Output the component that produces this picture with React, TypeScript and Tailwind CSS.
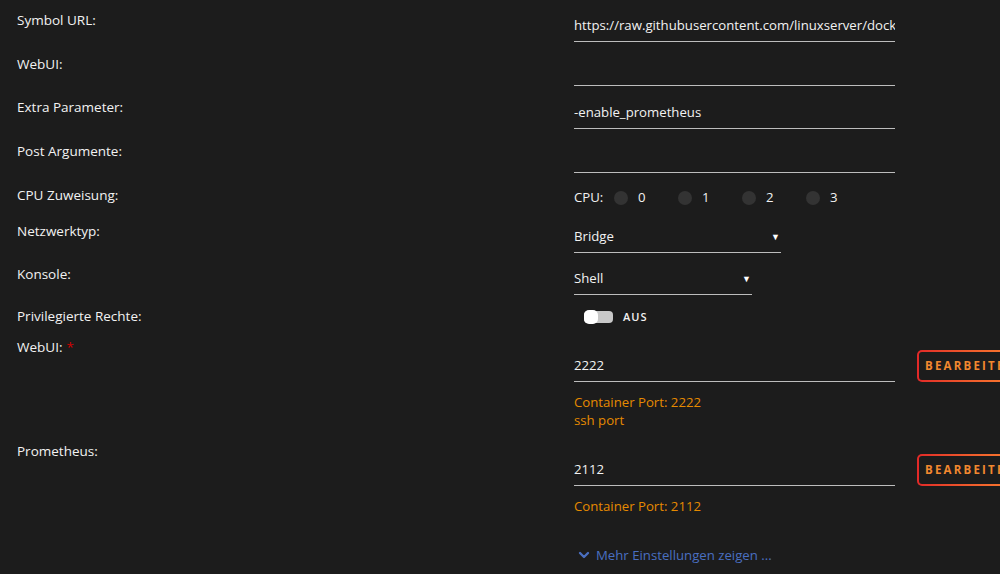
import { ChevronDown } from "lucide-react"
import type { ReactNode } from "react"

const font = { fontFamily: "'Open Sans', 'Noto Sans', sans-serif" }

function Label({ children, required }: { children: ReactNode; required?: boolean }) {
  return (
    <div className="w-[574px] shrink-0 pl-[17px] pt-[10px] text-[13.5px] leading-[20px] text-[#f2f2f2]">
      {children}
      {required && <span className="ml-1 text-[#d20000]">*</span>}
    </div>
  )
}

function TextInput({ value = "" }: { value?: string }) {
  return (
    <div className="w-[321px] h-[32px] flex items-center border-b border-[#bdbdbd] text-[13.2px] text-[#f2f2f2] overflow-hidden whitespace-nowrap">
      {value}
    </div>
  )
}

function Select({ value, width }: { value: string; width: string }) {
  return (
    <div
      className={`${width} h-[31px] flex items-center justify-between border-b border-[#bdbdbd] text-[13.2px] text-[#f2f2f2]`}
    >
      <span>{value}</span>
      <span className="mr-[1px] text-[9px] text-white">▼</span>
    </div>
  )
}

function EditButton() {
  return (
    <div className="ml-[22px] shrink-0 rounded-[5px] bg-gradient-to-r from-[#e22828] to-[#ff8d30] p-[2px]">
      <div className="h-[28px] w-[120px] rounded-[3px] bg-[#1c1c1c] pl-[6px] flex items-center text-[11.5px] font-bold tracking-[2.2px] text-[#f2882f] whitespace-nowrap">
        BEARBEITEN
      </div>
    </div>
  )
}

function Radio({ n }: { n: number }) {
  return (
    <div className="flex items-center w-[64px]">
      <span className="h-[14px] w-[14px] rounded-full bg-[#333333]" />
      <span className="ml-[10px]">{n}</span>
    </div>
  )
}

export default function App() {
  return (
    <div className="min-h-[574px] w-[1000px] overflow-hidden bg-[#1c1c1c]" style={font}>
      <div className="flex h-[44px]">
        <Label>Symbol URL:</Label>
        <div className="pt-[10px]">
          <TextInput value="https://raw.githubusercontent.com/linuxserver/docker-templates/master/linuxserver.io/img/openssh-server-logo.png" />
        </div>
      </div>
      <div className="flex h-[43px]">
        <Label>WebUI:</Label>
        <div className="pt-[10px]">
          <TextInput />
        </div>
      </div>
      <div className="flex h-[44px]">
        <Label>Extra Parameter:</Label>
        <div className="pt-[10px]">
          <TextInput value="-enable_prometheus" />
        </div>
      </div>
      <div className="flex h-[44px]">
        <Label>Post Argumente:</Label>
        <div className="pt-[10px]">
          <TextInput />
        </div>
      </div>
      <div className="flex h-[36px]">
        <Label>CPU Zuweisung:</Label>
        <div className="pt-[10px] flex items-center h-[36px] text-[13.2px] text-[#f2f2f2] self-start">
          <span className="w-[40px]">CPU:</span>
          <Radio n={0} />
          <Radio n={1} />
          <Radio n={2} />
          <Radio n={3} />
        </div>
      </div>
      <div className="flex h-[43px]">
        <Label>Netzwerktyp:</Label>
        <div className="pt-[11px]">
          <Select value="Bridge" width="w-[207px]" />
        </div>
      </div>
      <div className="flex h-[42px]">
        <Label>Konsole:</Label>
        <div className="pt-[10px]">
          <Select value="Shell" width="w-[178px]" />
        </div>
      </div>
      <div className="flex h-[31px]">
        <Label>Privilegierte Rechte:</Label>
        <div className="pt-[13px] pl-[10px] flex items-center gap-[10px] self-start">
          <div className="relative h-[12px] w-[29px] rounded-[4px] bg-[#c8c8c8]">
            <div className="absolute left-0 top-[-1px] h-[14px] w-[14px] rounded-[5px] bg-white" />
          </div>
          <span className="text-[11px] font-semibold tracking-[1px] text-[#f2f2f2]">AUS</span>
        </div>
      </div>
      <div className="flex h-[104px]">
        <Label required>WebUI:</Label>
        <div className="pt-[23px]">
          <div className="flex items-center">
            <TextInput value="2222" />
            <EditButton />
          </div>
          <div className="mt-[11px] text-[13.2px] leading-[18px] text-[#e68a00]">
            <div>Container Port: 2222</div>
            <div>ssh port</div>
          </div>
        </div>
      </div>
      <div className="flex h-[115px]">
        <Label>Prometheus:</Label>
        <div className="pt-[23px]">
          <div className="flex items-center">
            <TextInput value="2112" />
            <EditButton />
          </div>
          <div className="mt-[11px] text-[13.2px] leading-[18px] text-[#e68a00]">
            <div>Container Port: 2112</div>
          </div>
        </div>
      </div>
      <div className="flex">
        <div className="w-[574px] shrink-0" />
        <div className="flex items-center pl-[2px] text-[13.2px] leading-[18px] text-[#4a6fc0]">
          <ChevronDown className="h-[16px] w-[16px] mr-[4px]" strokeWidth={3.5} />
          <span>Mehr Einstellungen zeigen ...</span>
        </div>
      </div>
    </div>
  )
}
